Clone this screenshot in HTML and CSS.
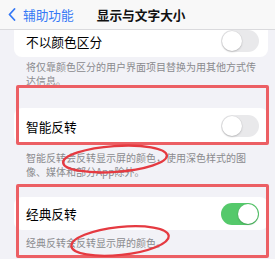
FILE: index.html
```html
<!DOCTYPE html>
<html lang="zh-CN">
<head>
    <meta charset="UTF-8">
    <meta name="viewport" content="width=device-width, initial-scale=1.0">
    <title>显示与文字大小</title>
    <link rel="stylesheet" href="styles.css">
</head>
<body>
    <div id="page">
        <div class="nav">
            <a class="back">
                <svg width="8" height="13" viewBox="0 0 8 13"><path d="M6.5 1 L1.5 6.5 L6.5 12" fill="none" stroke="#3478f6" stroke-width="1.8" stroke-linecap="round" stroke-linejoin="round"/></svg>
                <span>辅助功能</span>
            </a>
            <div class="title">显示与文字大小</div>
        </div>

        <div class="card card-top">
            <div class="row row-short">
                <span>不以颜色区分</span>
                <span class="switch"></span>
            </div>
        </div>
        <p class="note note-1">将仅靠颜色区分的用户界面项目替换为用其他方式传达信息。</p>

        <div class="card card-2">
            <div class="row row-2">
                <span>智能反转</span>
                <span class="switch"></span>
            </div>
        </div>
        <p class="note note-2">智能反转会反转显示屏的颜色，使用深色样式的图像、媒体和部分App除外。</p>

        <div class="card card-3">
            <div class="row row-3">
                <span>经典反转</span>
                <span class="switch on"></span>
            </div>
        </div>
        <p class="note note-3">经典反转会反转显示屏的颜色。</p>

        <!-- 标注 -->
        <div class="mark mark-1"></div>
        <div class="mark mark-2"></div>
        <svg class="rings" width="275" height="259" viewBox="0 0 275 259">
            <ellipse cx="115" cy="159" rx="52" ry="13" transform="rotate(-4 115 159)"/>
            <ellipse cx="120" cy="241" rx="49" ry="14" transform="rotate(-6 120 241)"/>
        </svg>
    </div>
</body>
</html>
```

FILE: styles.css
```css
*{
    padding: 0;
    margin: 0;
    box-sizing: border-box;
}
body{
    background-color: #f2f2f7;
    font-family: "Noto Sans CJK SC", "Noto Sans", sans-serif;
}
#page{
    width: 275px;
    height: 259px;
    overflow: hidden;
    position: relative;
}
.nav{
    height: 30px;
    display: flex;
    align-items: center;
    background-color: #f8f8f8;
    border-bottom: 1px solid #dadadd;
}
.back{
    display: flex;
    align-items: center;
    padding-left: 8px;
    color: #3478f6;
    font-size: 12.7px;
    line-height: 16px;
}
.back span{
    margin-left: 7px;
}
.title{
    margin-left: 23px;
    font-size: 12.7px;
    font-weight: 600;
    line-height: 16px;
    color: #111;
}
.card{
    margin: 0 7px 0 14px;
    background-color: #fff;
    border-radius: 8px;
}
.card-top{
    border-radius: 0 0 8px 8px;
    padding-bottom: 5px;
}
.card-2{
    margin-top: 20px;
}
.card-3{
    margin-top: 18px;
}
.row{
    display: flex;
    align-items: center;
    justify-content: space-between;
    padding: 0 9px 0 12px;
    font-size: 12.7px;
    color: #000;
}
.row-short{
    height: 22px;
}
.row-2{
    height: 36px;
}
.row-3{
    height: 33px;
}
.switch{
    width: 38px;
    height: 22px;
    border-radius: 11px;
    background-color: #e9e9eb;
    position: relative;
}
.switch::after{
    content: "";
    position: absolute;
    top: 1px;
    left: 1px;
    width: 20px;
    height: 20px;
    border-radius: 50%;
    background-color: #fff;
    box-shadow: 0 1px 2px rgba(0,0,0,0.18), 0 0 0 0.5px rgba(0,0,0,0.05);
}
.switch.on{
    background-color: #55c96b;
}
.switch.on::after{
    left: 17px;
}
.note{
    padding: 3px 14px 0 26px;
    font-size: 10px;
    line-height: 14px;
    color: #8a8a8e;
}
.note-2{
    padding-top: 7px;
}
.note-3{
    padding-top: 6px;
}
.mark{
    position: absolute;
    left: 16px;
    width: 253px;
    border: 3px solid #ec5f64;
    border-radius: 2px;
}
.mark-1{
    top: 85px;
    height: 60px;
}
.mark-2{
    top: 184px;
    height: 74px;
}
.rings{
    position: absolute;
    left: 0;
    top: 0;
}
.rings ellipse{
    fill: none;
    stroke: #e53a41;
    stroke-width: 2.3;
}
```
